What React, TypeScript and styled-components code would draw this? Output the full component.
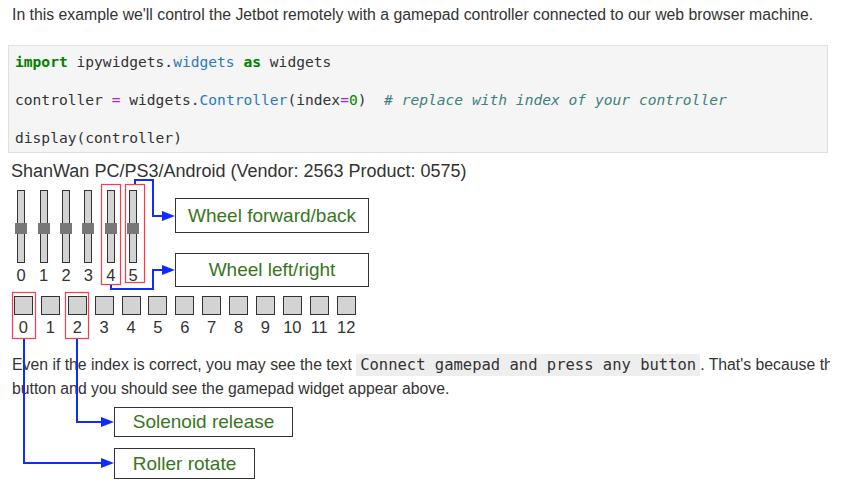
import { createGlobalStyle } from 'styled-components';
import styled from 'styled-components';

const GlobalStyle = createGlobalStyle`
  html, body {
    margin: 0;
    padding: 0;
    background: #fff;
  }
`;

const Page = styled.div`
  position: relative;
  width: 843px;
  height: 486px;
  overflow: hidden;
  background: #fff;
  color: #333;
`;

// markdown text cells
const Prose = styled.p<{ $top: number }>`
  margin: ${p => p.$top}px 0 0 0;
  padding-left: 12px;
  width: 818px;
  overflow: hidden;
  font-family: "Liberation Sans", Arial, sans-serif;
  font-size: 15.8px;
  line-height: 24px;
  color: #333;
  white-space: nowrap;
`;

const InlineCode = styled.code`
  font-family: "DejaVu Sans Mono", monospace;
  font-size: 15.5px;
  background: #eee;
  padding: 2px 4px;
`;

const CodeCell = styled.pre`
  margin: 18px 0 0 8px;
  width: 820px;
  padding: 6px 8px 5px 6px;
  background: #f5f5f5;
  border: 1px solid #e0e0e0;
  font-family: "DejaVu Sans Mono", monospace;
  font-size: 14.6px;
  line-height: 19px;
  color: #333;
  box-sizing: border-box;
`;

const Kw = styled.span`
  color: #008000;
  font-weight: bold;
`;
const Prop = styled.span`
  color: #2d7ab9;
`;
const Op = styled.span`
  color: #aa22ff;
`;
const Num = styled.span`
  color: #008800;
`;
const Comment = styled.span`
  color: #408080;
  font-style: italic;
`;

const WidgetTitle = styled.div`
  margin: 8px 0 0 11px;
  font-family: "Liberation Sans", Arial, sans-serif;
  font-size: 18px;
  line-height: 20px;
  color: #333;
`;

const AxisRow = styled.div`
  display: flex;
  margin: 9px 0 0 10px;
`;

const AxisCol = styled.div`
  width: 22.4px;
  display: flex;
  flex-direction: column;
  align-items: center;
`;

const Track = styled.div`
  position: relative;
  width: 8px;
  height: 73px;
  box-sizing: border-box;
  background: #d3d3d3;
  border: 1px solid #333;
`;

const Thumb = styled.div`
  position: absolute;
  left: -3px;
  width: 12px;
  height: 11px;
  background: #777;
`;

const Index = styled.div`
  margin-top: 3px;
  font-family: "Liberation Sans", Arial, sans-serif;
  font-size: 16.5px;
  line-height: 18px;
  color: #333;
`;

const ButtonRow = styled.div`
  display: flex;
  margin: 12px 0 0 10px;
`;

const ButtonCol = styled.div`
  width: 26.9px;
  display: flex;
  flex-direction: column;
  align-items: center;
`;

const PadButton = styled.div`
  width: 19px;
  height: 19px;
  box-sizing: border-box;
  background: #d3d3d3;
  border: 1.5px solid #333;
`;

const Overlay = styled.svg`
  position: absolute;
  left: 0;
  top: 0;
  pointer-events: none;
`;

const Callout = styled.div<{ $x: number; $y: number; $w: number; $h: number }>`
  position: absolute;
  left: ${p => p.$x}px;
  top: ${p => p.$y}px;
  width: ${p => p.$w}px;
  height: ${p => p.$h}px;
  box-sizing: border-box;
  display: flex;
  align-items: center;
  justify-content: center;
  background: #fff;
  border: 1px solid #333;
  font-family: "Liberation Sans", Arial, sans-serif;
  font-size: 19px;
  color: #38761d;
`;

const axes = [0, 1, 2, 3, 4, 5];
const buttons = Array.from({ length: 13 }, (_, i) => i);

const BLUE = '#0f2cff';
const RED = '#ff3b48';

const links = [
  { pts: '135,184 135,180 153,180 153,216 162,216', tip: [175, 216] },
  { pts: '111,285 111,289 153,289 153,270 162,270', tip: [175, 270] },
  { pts: '77,339 77,422 102,422', tip: [114, 422] },
  { pts: '24,339 24,463 102,463', tip: [114, 463] },
];

const boxes = [
  { x: 101.5, y: 184.5, w: 19, h: 100 },
  { x: 125.5, y: 184.5, w: 19, h: 98 },
  { x: 12.5, y: 292.5, w: 23, h: 46 },
  { x: 65.5, y: 292.5, w: 23, h: 46 },
];

export default function App() {
  return (
    <>
      <GlobalStyle />
      <Page>
        <Prose $top={3}>
          In this example we'll control the Jetbot remotely with a gamepad controller connected to our web browser machine.
        </Prose>

        <CodeCell>
          <Kw>import</Kw> ipywidgets.<Prop>widgets</Prop> <Kw>as</Kw> widgets{'\n'}
          {'\n'}
          controller <Op>=</Op> widgets.<Prop>Controller</Prop>(index<Op>=</Op><Num>0</Num>)  <Comment># replace with index of your controller</Comment>{'\n'}
          {'\n'}
          display(controller)
        </CodeCell>

        <WidgetTitle>ShanWan PC/PS3/Android (Vendor: 2563 Product: 0575)</WidgetTitle>

        <AxisRow>
          {axes.map(a => (
            <AxisCol key={a}>
              <Track>
                <Thumb style={{ top: 32 }} />
              </Track>
              <Index>{a}</Index>
            </AxisCol>
          ))}
        </AxisRow>

        <ButtonRow>
          {buttons.map(b => (
            <ButtonCol key={b}>
              <PadButton />
              <Index>{b}</Index>
            </ButtonCol>
          ))}
        </ButtonRow>

        <Prose $top={17}>
          Even if the index is correct, you may see the text <InlineCode>Connect gamepad and press any button</InlineCode>. That's because the
          <br />
          button and you should see the gamepad widget appear above.
        </Prose>

        <Overlay width={843} height={486} viewBox="0 0 843 486">
          {boxes.map((b, i) => (
            <rect key={i} x={b.x} y={b.y} width={b.w} height={b.h} fill="none" stroke={RED} strokeWidth={1.2} />
          ))}
          {links.map((l, i) => {
            const [tx, ty] = l.tip;
            return (
              <g key={i}>
                <polyline points={l.pts} fill="none" stroke={BLUE} strokeWidth={2} />
                <polygon points={`${tx - 13},${ty - 5} ${tx},${ty} ${tx - 13},${ty + 5}`} fill={BLUE} />
              </g>
            );
          })}
        </Overlay>

        <Callout $x={175} $y={198} $w={194} $h={35}>Wheel forward/back</Callout>
        <Callout $x={175} $y={253} $w={194} $h={34}>Wheel left/right</Callout>
        <Callout $x={114} $y={407} $w={179} $h={30}>Solenoid release</Callout>
        <Callout $x={114} $y={448} $w={141} $h={31}>Roller rotate</Callout>
      </Page>
    </>
  );
}
